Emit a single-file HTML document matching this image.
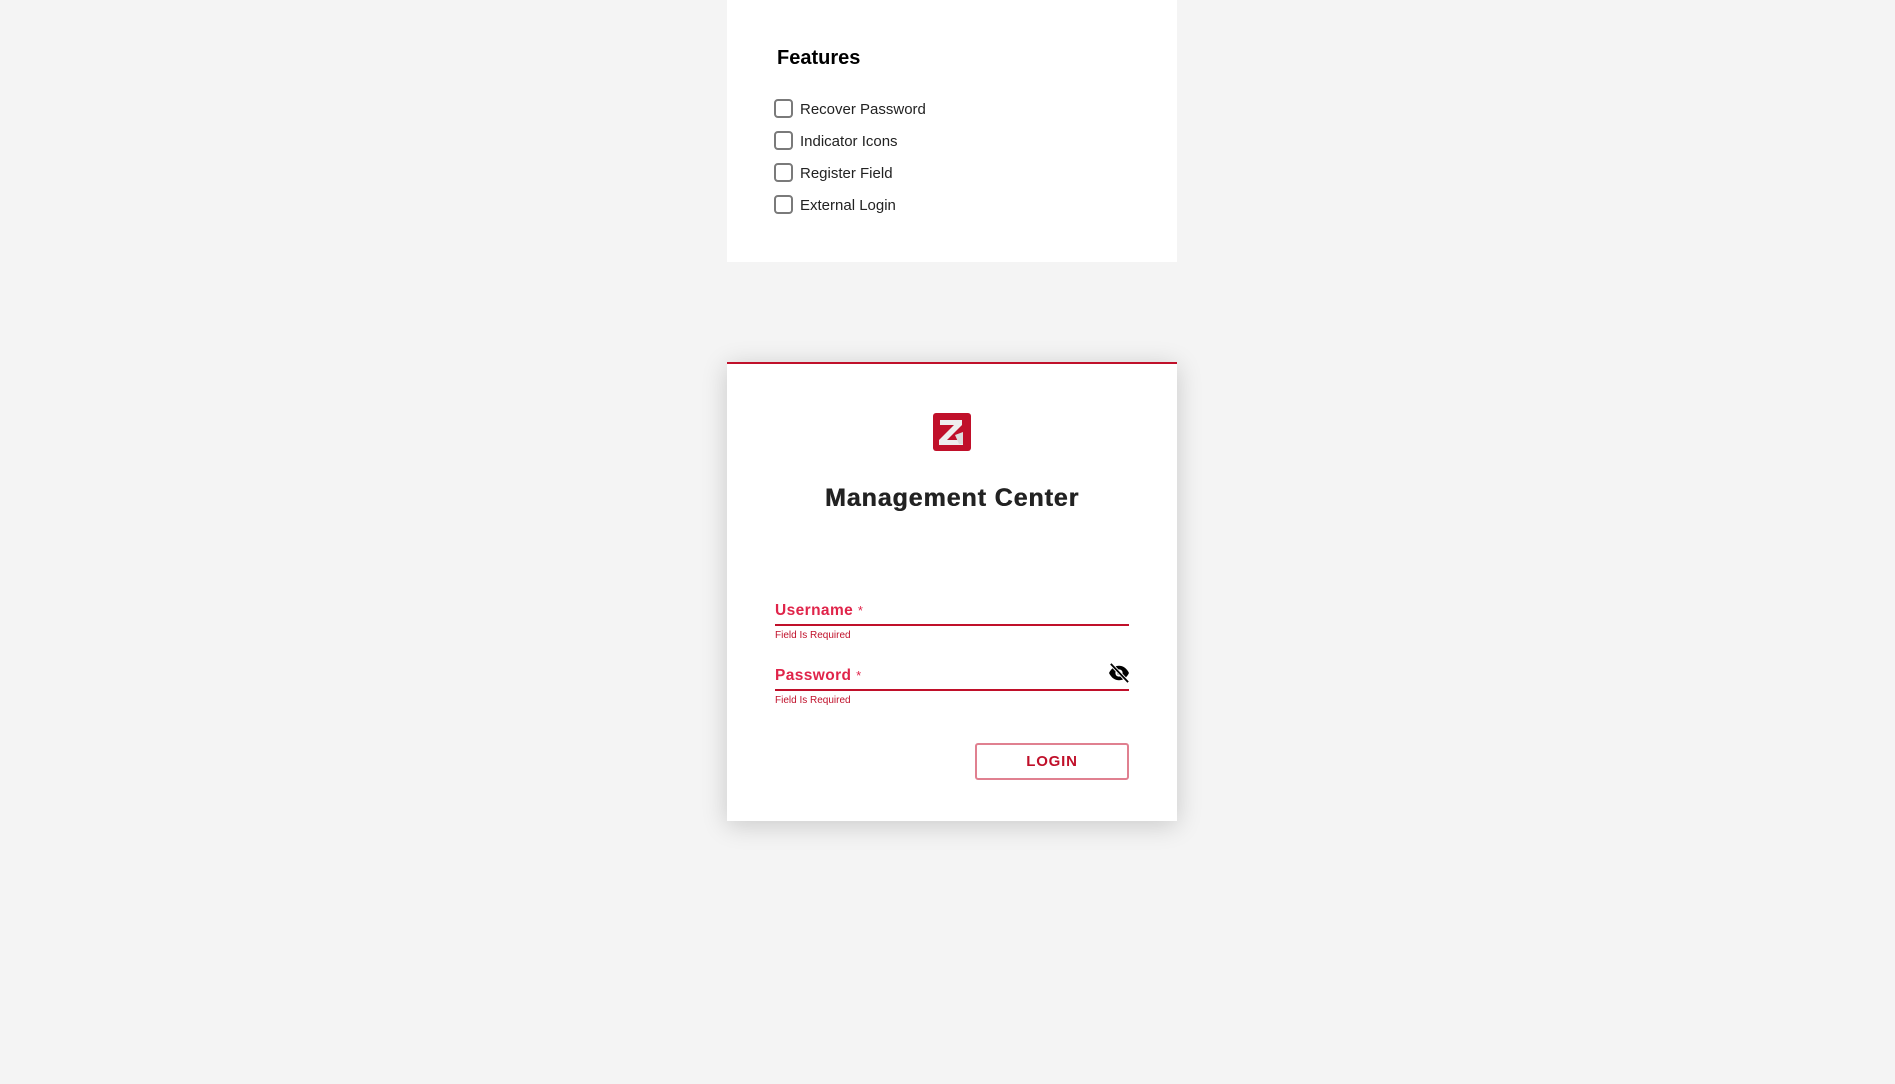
<!DOCTYPE html>
<html><head><style>
body{margin:0;width:1895px;height:1084px;background:#f4f4f4;font-family:"Liberation Sans",Arial,sans-serif;position:relative;overflow:hidden}
.a{position:absolute}
.panel{left:727px;top:0;width:450px;height:262px;background:#fff}
.card{left:727px;top:362px;width:450px;height:457px;background:#fff;border-top:2px solid #c0102a;box-shadow:0 4px 24px rgba(0,0,0,.18)}
.cb{width:15px;height:15px;border:2px solid #7a7a7a;border-radius:4px;left:774px}
.lbl{left:800px;font-size:15px;color:#222}
.red{color:#e0244a}
</style></head><body>
<div class="a panel"></div>
<div class="a" style="left:777px;top:47px;font-size:20px;font-weight:bold;color:#000">Features</div>
<div class="a cb" style="top:99px"></div><div class="a lbl" style="top:101px">Recover Password</div>
<div class="a cb" style="top:131px"></div><div class="a lbl" style="top:133px">Indicator Icons</div>
<div class="a cb" style="top:163px"></div><div class="a lbl" style="top:165px">Register Field</div>
<div class="a cb" style="top:195px"></div><div class="a lbl" style="top:197px">External Login</div>

<div class="a card"></div>
<svg class="a" style="left:933px;top:413px" width="38" height="38" viewBox="0 0 38 38">
<rect width="38" height="38" rx="3" fill="#c0102a"/>
<path d="M7 7h22v5L14 27h16v5H6v-5L21 12H7z" fill="#eee"/>
<path d="M22 22l8-3v12h-4z" fill="#ddd"/>
</svg>
<div class="a" style="left:727px;width:450px;top:484px;text-align:center;font-size:25px;font-weight:bold;letter-spacing:0.9px;color:#222;text-shadow:0.5px 0 0 #222">Management Center</div>

<div class="a red" style="left:775px;top:602px;font-size:15.5px;font-weight:bold;letter-spacing:.4px">Username <span style="font-weight:normal;font-size:13px">*</span></div>
<div class="a" style="left:775px;top:624px;width:354px;height:1.5px;background:#c0102a"></div>
<div class="a" style="left:775px;top:630px;font-size:10px;color:#c0102a">Field Is Required</div>

<div class="a red" style="left:775px;top:667px;font-size:15.5px;font-weight:bold;letter-spacing:.4px">Password <span style="font-weight:normal;font-size:13px">*</span></div>
<svg class="a" style="left:1108px;top:663px" width="22" height="20" viewBox="0 0 24 22">
<path d="M1 11C4 5 8 3 12 3s8 2 11 8c-3 6-7 8-11 8S4 17 1 11z" fill="#000"/>
<circle cx="12" cy="11" r="4" fill="#fff"/><circle cx="12" cy="11" r="2" fill="#000"/>
<path d="M3 1l19 20" stroke="#fff" stroke-width="4"/><path d="M3 1l19 20" stroke="#000" stroke-width="2"/>
</svg>
<div class="a" style="left:775px;top:689px;width:354px;height:1.5px;background:#c0102a"></div>
<div class="a" style="left:775px;top:695px;font-size:10px;color:#c0102a">Field Is Required</div>

<div class="a" style="left:975px;top:743px;width:150px;height:33px;border:2px solid #e08090;border-radius:3px;text-align:center;line-height:34px;font-size:15px;font-weight:bold;color:#c0102a;letter-spacing:.8px">LOGIN</div>
</body></html>
